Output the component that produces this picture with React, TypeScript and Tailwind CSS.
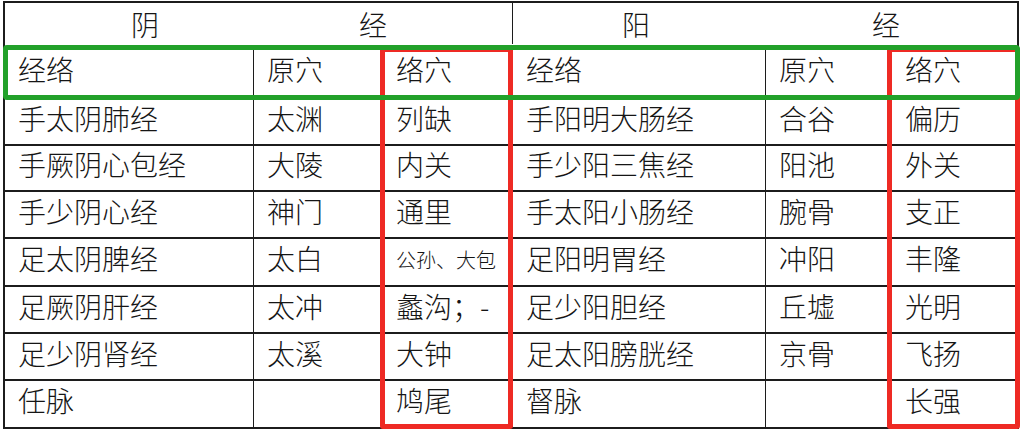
const yinRows = [
  ["手太阴肺经", "太渊", "列缺"],
  ["手厥阴心包经", "大陵", "内关"],
  ["手少阴心经", "神门", "通里"],
  ["足太阴脾经", "太白", "公孙、大包"],
  ["足厥阴肝经", "太冲", "蠡沟；-"],
  ["足少阴肾经", "太溪", "大钟"],
  ["任脉", "", "鸠尾"],
];

const yangRows = [
  ["手阳明大肠经", "合谷", "偏历"],
  ["手少阳三焦经", "阳池", "外关"],
  ["手太阳小肠经", "腕骨", "支正"],
  ["足阳明胃经", "冲阳", "丰隆"],
  ["足少阳胆经", "丘墟", "光明"],
  ["足太阳膀胱经", "京骨", "飞扬"],
  ["督脉", "", "长强"],
];

const heights = ["h-[47px]", "h-[46px]", "h-[47px]", "h-[48px]", "h-[47px]", "h-[47px]", "h-[48px]"];

const Cell = ({ text, first }: { text: string; first?: boolean }) => {
  const small = text.length > 4 && text.includes("、");
  return (
    <div
      className={`flex items-center pl-[13px] whitespace-nowrap leading-none ${
        first ? "" : "border-l-[1.5px] border-[#1c1c1c]"
      } ${small ? "text-[20px] pb-[4px]" : "text-[28px] pb-[8px]"}`}
    >
      {text}
    </div>
  );
};

export default function App() {
  const rows = yinRows.map((r, i) => [...r, ...yangRows[i]]);

  return (
    <div
      className="relative w-[1030px] h-[435px] bg-white text-[#151515] font-light"
      style={{ fontFamily: '"Noto Sans CJK SC", "Noto Sans", sans-serif' }}
    >
      {/* Table */}
      <div className="absolute left-[3px] top-[1px] w-[1016px] border-2 border-[#1c1c1c]">
        <div className="flex h-[44px] text-[28px] leading-none pb-[3px]">
          <div className="w-[507px] flex items-center justify-between pl-[126px] pr-[125px]">
            <span>阴</span>
            <span>经</span>
          </div>
          <div className="flex-1 flex items-center justify-between pl-[109px] pr-[117px] border-l-[1.5px] border-[#1c1c1c]">
            <span>阳</span>
            <span>经</span>
          </div>
        </div>

        <div className="grid grid-cols-[248px_129px_130px_253px_126px_1fr] h-[50px] border-t-2 border-[#1c1c1c]">
          <Cell text="经络" first />
          <Cell text="原穴" />
          <Cell text="络穴" />
          <Cell text="经络" />
          <Cell text="原穴" />
          <Cell text="络穴" />
        </div>

        {rows.map((r, i) => (
          <div
            key={i}
            className={`grid grid-cols-[248px_129px_130px_253px_126px_1fr] border-t-2 border-[#1c1c1c] ${heights[i]}`}
          >
            {r.map((t, j) => (
              <Cell key={j} text={t} first={j === 0} />
            ))}
          </div>
        ))}
      </div>

      {/* Annotation boxes */}
      <div className="absolute left-[380px] top-[47px] w-[133px] h-[382px] border-[5px] border-[#ee2a24] rounded-[3px]" />
      <div className="absolute left-[887px] top-[47px] w-[133px] h-[382px] border-[5px] border-[#ee2a24] rounded-[3px]" />
      <div className="absolute left-[3px] top-[45px] w-[1017px] h-[55px] border-[5px] border-[#22a12a] rounded-[4px]" />
    </div>
  );
}
